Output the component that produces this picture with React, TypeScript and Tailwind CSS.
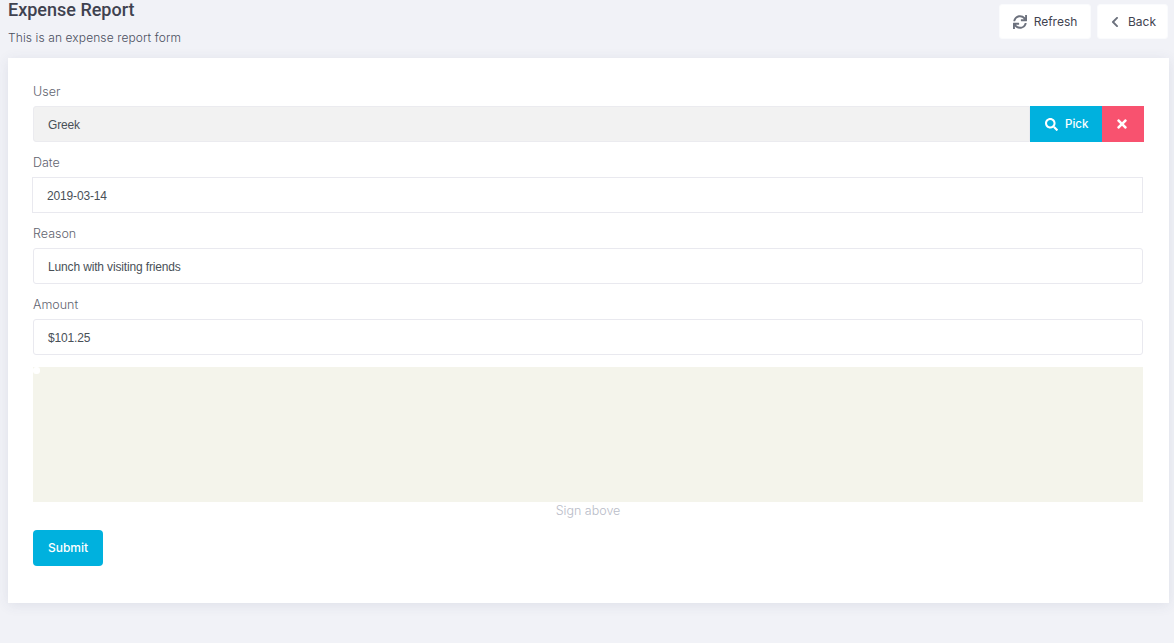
import React from 'react';
import { FaSync, FaChevronLeft, FaSearch, FaTimes } from 'react-icons/fa';

const poppins = "font-['Inter','Noto_Sans',sans-serif]";
const arial = "font-['Liberation_Sans',Arial,sans-serif]";

const FIELDS = [
    { label: 'Date', value: '2019-03-14', shape: '-ml-px rounded-none', gap: 'mb-[10px]' },
    { label: 'Reason', value: 'Lunch with visiting friends', shape: 'rounded-[3px]', gap: 'mb-[10px]' },
    { label: 'Amount', value: '$101.25', shape: 'rounded-[3px]', gap: 'mb-3' },
];

function FieldLabel({ children }: { children: React.ReactNode }) {
    return (
        <label className={`block h-5 mb-[5px] text-[12.5px] leading-[22px] font-light text-[#5f6470] ${poppins}`}>
            {children}
        </label>
    );
}

function HeaderButton({ icon, text, width }: { icon: React.ReactNode; text: string; width: string }) {
    return (
        <button className={`${width} h-[35px] flex items-center justify-center gap-[7px] bg-white rounded-[3px] border border-[#fafbfd] text-[12px] text-[#3f4350] ${poppins}`}>
            {icon}
            {text}
        </button>
    );
}

export default function App() {
    return (
        <div className="h-[643px] overflow-hidden bg-[#f1f2f7] pl-2 pr-[5px]">
            <div className="h-[58px] flex justify-between">
                <div>
                    <h1 className="text-[18px] leading-5 font-medium text-[#3f4250] font-['Roboto',sans-serif]">Expense Report</h1>
                    <p className={`mt-2 text-[12px] tracking-[0.1px] leading-5 font-light text-[#4b4f5e] ${poppins}`}>This is an expense report form</p>
                </div>
                <div className="flex gap-[6px] pt-1 pr-px">
                    <HeaderButton width="w-[92px]" icon={<FaSync size={14} className="text-[#6c717d]" />} text="Refresh" />
                    <HeaderButton width="w-[71px]" icon={<FaChevronLeft size={12} className="text-[#6c717d]" />} text="Back" />
                </div>
            </div>

            <div className="h-[545px] bg-white pt-[23px] pl-[25px] pr-[26px] shadow-[0_2px_12px_rgba(60,70,110,0.1)]">
                <FieldLabel>User</FieldLabel>
                <div className="flex h-9 mb-[10px] -mr-px">
                    <div className={`flex-1 flex items-center pl-[14px] pt-px bg-[#f2f2f2] border border-[#ebebef] rounded-l-[3px] text-[12px] tracking-[-0.15px] text-[#495057] ${arial}`}>
                        Greek
                    </div>
                    <button className={`w-[72px] flex items-center pl-[15px] gap-[7px] pt-px bg-[#00b1de] text-white text-[11.5px] font-medium ${poppins}`}>
                        <FaSearch size={13} />
                        Pick
                    </button>
                    <button className="w-[42px] flex items-center justify-center pr-[3px] bg-[#f8526f] text-white">
                        <FaTimes size={14} />
                    </button>
                </div>

                {FIELDS.map((f) => (
                    <div key={f.label} className={f.gap}>
                        <FieldLabel>{f.label}</FieldLabel>
                        <div className={`h-9 flex items-center pl-[14px] pt-px bg-white border border-[#e9e9ef] text-[12px] tracking-[-0.15px] text-[#495057] ${f.shape} ${arial}`}>
                            {f.value}
                        </div>
                    </div>
                ))}

                <div className="relative h-[135px] bg-[#f4f4eb]">
                    <div className="absolute top-0 left-0 w-[7px] h-[7px] bg-white rounded-[3px]" />
                </div>
                <p className={`h-4 text-center text-[12.5px] leading-[18px] font-light text-[#b9bcc8] ${poppins}`}>Sign above</p>
                <button className={`mt-3 w-[70px] h-9 bg-[#00b1de] text-white rounded-[4px] text-[12px] font-medium ${poppins}`}>
                    Submit
                </button>
            </div>
        </div>
    );
}
